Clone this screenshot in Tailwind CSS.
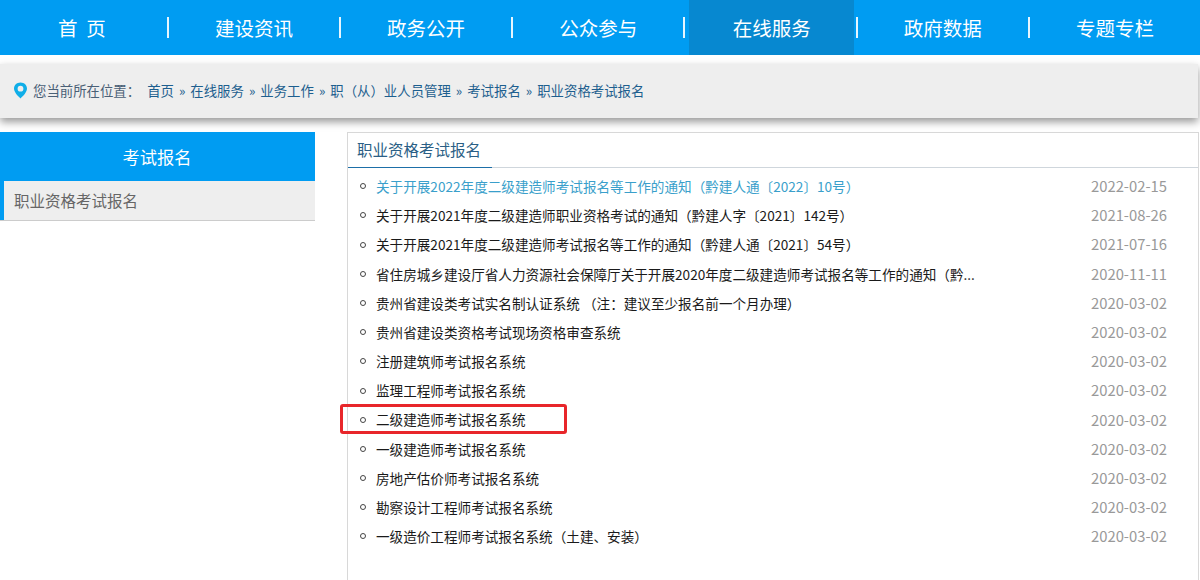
<!DOCTYPE html>
<html lang="zh">
<head>
<meta charset="utf-8">
<script src="https://cdn.jsdelivr.net/npm/@tailwindcss/browser@4"></script>
</head>
<body class="bg-white font-['Noto_Sans_CJK_SC','Noto_Sans',sans-serif] overflow-hidden">
<div class="w-[1200px] h-[580px] overflow-hidden">
  <nav class="h-[55px] bg-[#009cf2] flex items-center text-white text-[19.5px] text-center">
    <a class="w-[167px] pr-[3px] whitespace-pre">首  页</a>
    <span class="w-[2px] h-[21px] bg-white/90"></span>
    <a class="w-[170.4px]">建设资讯</a>
    <span class="w-[2px] h-[21px] bg-white/90"></span>
    <a class="w-[170.4px]">政务公开</a>
    <span class="w-[2px] h-[21px] bg-white/90"></span>
    <a class="w-[170.4px]">公众参与</a>
    <span class="w-[2px] h-[21px] bg-white/90"></span>
    <a class="w-[165px] ml-[4px] mr-[1.4px] h-[55px] leading-[55px] bg-[#0788d0]">在线服务</a>
    <span class="w-[2px] h-[21px] bg-white/90"></span>
    <a class="w-[170.4px]">政府数据</a>
    <span class="w-[2px] h-[21px] bg-white/90"></span>
    <a class="w-[170.4px]">专题专栏</a>
  </nav>
  <div class="mt-[9px] h-[54px] w-[1198px] bg-[#eeeeee] shadow-[0_4px_8px_rgba(0,0,0,0.4)] flex items-center pl-[13px] pb-[1px] text-[13.4px] text-[#1d5f8f]">
    <svg class="w-[15px] h-[17px] mr-[5px]" viewBox="0 0 15 17"><path fill-rule="evenodd" fill="#10aee8" d="M7.5 0.5C3.6 0.5 1 3.3 1 6.6c0 3.8 4.3 7.9 6.5 10 2.2-2.1 6.5-6.200 6.500-10C14 3.300 11.400 0.500 7.500 0.500zM7.500 3.800a2.900 2.900 0 1 1 0 5.800a2.900 2.900 0 1 1 0-5.800z"/></svg>
    <span class="text-[#4a6076] mr-[7px]">您当前所在位置：</span>
    <span>首页</span><span class="mx-[5px]">»</span><span>在线服务</span><span class="mx-[5px]">»</span><span>业务工作</span><span class="mx-[5px]">»</span><span>职（从）业人员管理</span><span class="mx-[5px]">»</span><span>考试报名</span><span class="mx-[5px]">»</span><span>职业资格考试报名</span>
  </div>
  <div class="mt-[14px] flex items-start">
    <aside class="w-[315px]">
      <div class="h-[49px] bg-[#009cf2] text-white text-[17.2px] flex items-center justify-center pr-[1px]">考试报名</div>
      <div class="h-[40px] bg-[#eeeeee] border-l-[4px] border-[#009cf2] relative flex items-center pl-[10px] text-[15.5px] text-[#666666]">职业资格考试报名<span class="absolute left-[-4px] right-0 bottom-0 h-[1px] bg-[#cccccc]"></span></div>
    </aside>
    <main class="ml-[32px] w-[852px] h-[450px] border-l border-r border-t border-[#d8d8d8]">
      <div class="h-[35px] border-b border-[#cfd6dc] relative">
        <div class="w-[144px] h-[35px] border-b border-[#1d6fa8] pl-[9px] text-[15.5px] leading-[32px] text-[#2b5f86]">职业资格考试报名</div>
      </div>
      <ul class="pt-[3.6px] text-[13.6px] text-[#1a1a1a]">
        <li class="h-[29.2px] flex items-center"><span class="w-[6px] h-[6px] rounded-full border-[1.5px] border-[#444] ml-[12px] mr-[10px]"></span><span class="text-[#3a9fcb] w-[715px] truncate">关于开展2022年度二级建造师考试报名等工作的通知（黔建人通〔2022〕10号）</span><span class="text-[#999] text-[14.8px]">2022-02-15</span></li>
        <li class="h-[29.2px] flex items-center"><span class="w-[6px] h-[6px] rounded-full border-[1.5px] border-[#444] ml-[12px] mr-[10px]"></span><span class="w-[715px] truncate">关于开展2021年度二级建造师职业资格考试的通知（黔建人字〔2021〕142号）</span><span class="text-[#999] text-[14.8px]">2021-08-26</span></li>
        <li class="h-[29.2px] flex items-center"><span class="w-[6px] h-[6px] rounded-full border-[1.5px] border-[#444] ml-[12px] mr-[10px]"></span><span class="w-[715px] truncate">关于开展2021年度二级建造师考试报名等工作的通知（黔建人通〔2021〕54号）</span><span class="text-[#999] text-[14.8px]">2021-07-16</span></li>
        <li class="h-[29.2px] flex items-center"><span class="w-[6px] h-[6px] rounded-full border-[1.5px] border-[#444] ml-[12px] mr-[10px]"></span><span class="w-[715px]">省住房城乡建设厅省人力资源社会保障厅关于开展2020年度二级建造师考试报名等工作的通知（黔...</span><span class="text-[#999] text-[14.8px]">2020-11-11</span></li>
        <li class="h-[29.2px] flex items-center"><span class="w-[6px] h-[6px] rounded-full border-[1.5px] border-[#444] ml-[12px] mr-[10px]"></span><span class="w-[715px] truncate">贵州省建设类考试实名制认证系统 （注：建议至少报名前一个月办理）</span><span class="text-[#999] text-[14.8px]">2020-03-02</span></li>
        <li class="h-[29.2px] flex items-center"><span class="w-[6px] h-[6px] rounded-full border-[1.5px] border-[#444] ml-[12px] mr-[10px]"></span><span class="w-[715px] truncate">贵州省建设类资格考试现场资格审查系统</span><span class="text-[#999] text-[14.8px]">2020-03-02</span></li>
        <li class="h-[29.2px] flex items-center"><span class="w-[6px] h-[6px] rounded-full border-[1.5px] border-[#444] ml-[12px] mr-[10px]"></span><span class="w-[715px] truncate">注册建筑师考试报名系统</span><span class="text-[#999] text-[14.8px]">2020-03-02</span></li>
        <li class="h-[29.2px] flex items-center"><span class="w-[6px] h-[6px] rounded-full border-[1.5px] border-[#444] ml-[12px] mr-[10px]"></span><span class="w-[715px] truncate">监理工程师考试报名系统</span><span class="text-[#999] text-[14.8px]">2020-03-02</span></li>
        <li class="h-[29.2px] flex items-center relative"><span class="absolute left-[-8px] top-[-1px] w-[227px] h-[30px] border-[3px] border-[#e8262a] rounded-[3px]"></span><span class="w-[6px] h-[6px] rounded-full border-[1.5px] border-[#444] ml-[12px] mr-[10px]"></span><span class="w-[715px] truncate">二级建造师考试报名系统</span><span class="text-[#999] text-[14.8px]">2020-03-02</span></li>
        <li class="h-[29.2px] flex items-center"><span class="w-[6px] h-[6px] rounded-full border-[1.5px] border-[#444] ml-[12px] mr-[10px]"></span><span class="w-[715px] truncate">一级建造师考试报名系统</span><span class="text-[#999] text-[14.8px]">2020-03-02</span></li>
        <li class="h-[29.2px] flex items-center"><span class="w-[6px] h-[6px] rounded-full border-[1.5px] border-[#444] ml-[12px] mr-[10px]"></span><span class="w-[715px] truncate">房地产估价师考试报名系统</span><span class="text-[#999] text-[14.8px]">2020-03-02</span></li>
        <li class="h-[29.2px] flex items-center"><span class="w-[6px] h-[6px] rounded-full border-[1.5px] border-[#444] ml-[12px] mr-[10px]"></span><span class="w-[715px] truncate">勘察设计工程师考试报名系统</span><span class="text-[#999] text-[14.8px]">2020-03-02</span></li>
        <li class="h-[29.2px] flex items-center"><span class="w-[6px] h-[6px] rounded-full border-[1.5px] border-[#444] ml-[12px] mr-[10px]"></span><span class="w-[715px] truncate">一级造价工程师考试报名系统（土建、安装）</span><span class="text-[#999] text-[14.8px]">2020-03-02</span></li>
      </ul>
    </main>
  </div>
</div>
</body>
</html>
